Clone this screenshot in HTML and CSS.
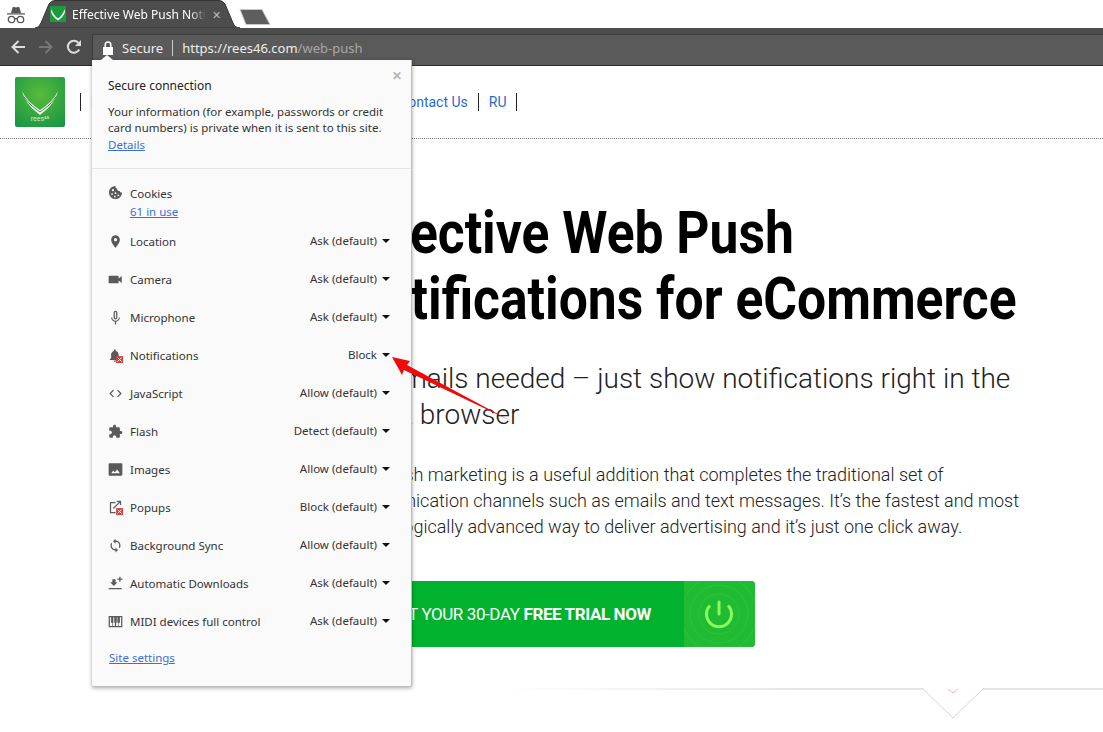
FILE: index.html
```html
<!DOCTYPE html>
<html>
<head>
    <title>Effective Web Push Notifications</title>
    <link rel="stylesheet" href="styles.css">
</head>
<body>
    <div class="tabstrip">
        <svg class="incognito" width="20" height="20" viewBox="0 0 20 20">
            <path fill="#555" d="M5 8 L6.5 2.5 Q7 1.5 8 2 L10 2.6 L12 2 Q13 1.5 13.5 2.5 L15 8 Z M1 8.2 H19 V9.6 H1 Z"/>
            <circle cx="5.5" cy="14.5" r="3.2" fill="none" stroke="#555" stroke-width="1.3"/>
            <circle cx="14.5" cy="14.5" r="3.2" fill="none" stroke="#555" stroke-width="1.3"/>
            <path stroke="#555" stroke-width="1.3" d="M8.6 14 Q10 13 11.4 14" fill="none"/>
        </svg>
        <div class="tab">
            <svg class="tab-shape" width="206" height="28" viewBox="0 0 206 28">
                <path fill="#4d4d4d" stroke="#333" d="M0 28 Q4 28 6 23 L14 4 Q16 .5 20 .5 H184 Q188 .5 190 4 L198 23 Q200 28 205 28 Z"/>
            </svg>
            <span class="tab-icon">
                <svg width="16" height="16" viewBox="0 0 16 16">
                    <rect width="16" height="16" fill="#1d9a3e"/>
                    <path fill="#fff" d="M1.5 3 Q3 9 8 12.5 Q13 9 14.5 3 L15 6 Q13 11.5 8 14.5 Q3 11.5 1 6 Z"/>
                </svg>
            </span>
            <span class="tab-title">Effective Web Push Notifications</span>
            <span class="tab-close">✕</span>
        </div>
        <svg class="new-tab" width="34" height="18" viewBox="0 0 34 18">
            <path fill="#5e5e5e" stroke="#c9c9c9" d="M2 1.5 H24 L32 16.5 H8 Z"/>
        </svg>
    </div>

    <div class="toolbar">
        <div class="nav-buttons">
            <svg width="16" height="16" viewBox="0 0 16 16"><path fill="none" stroke="#ddd" stroke-width="2" d="M15 8H2.5M8.5 2L2.5 8l6 6"/></svg>
            <svg width="16" height="16" viewBox="0 0 16 16"><path fill="none" stroke="#777" stroke-width="2" d="M1 8h12.5M7.5 2l6 6-6 6"/></svg>
            <svg width="16" height="16" viewBox="0 0 16 16"><path fill="none" stroke="#ddd" stroke-width="2" d="M13.2 10.5A6 6 0 1 1 12.4 3.8"/><path fill="#ddd" d="M15 1v6H9z"/></svg>
        </div>
        <div class="omnibox">
            <svg class="lock" width="12" height="14" viewBox="0 0 12 14"><path fill="none" stroke="#fff" stroke-width="1.5" d="M3.2 6V3.8a2.8 2.8 0 0 1 5.6 0V6"/><rect x="1" y="6" width="10" height="8" fill="#fff"/></svg>
            <span class="secure">Secure</span>
            <span class="url"><b>https://rees46.com</b>/web-push</span>
        </div>
    </div>

    <header class="site-header">
        <div class="site-logo">
            <svg width="36" height="24" viewBox="0 0 36 24">
                <path fill="#fff" opacity=".95" d="M0 0 Q5 11 18 19 Q31 11 36 0 Q33 13 18 24 Q3 13 0 0 Z"/>
                <path fill="none" stroke="#2ba144" d="M2 6 Q8 15 18 21 Q28 15 34 6"/>
            </svg>
            <span>rees⁴⁶</span>
        </div>
        <nav class="site-nav">
            <a href="#">Platform</a>
            <a href="#">Integration</a>
            <a href="#">Pricing</a>
            <a href="#">Company</a>
            <a href="#">Contact Us</a>
            <a href="#">RU</a>
        </nav>
    </header>

    <main class="hero">
        <h1>Effective Web Push<br>Notifications for eCommerce</h1>
        <p class="lead">No emails needed – just show notifications right in the<br>latest browser</p>
        <p class="intro">Web push marketing is a useful addition that completes the traditional set of<br>communication channels such as emails and text messages. It’s the fastest and most<br>technologically advanced way to deliver advertising and it’s just one click away.</p>
        <a class="cta" href="#">
            <span class="cta-text">START YOUR 30-DAY <b>FREE TRIAL NOW</b></span>
            <span class="cta-icon">
                <svg width="71" height="66" viewBox="0 0 71 66">
                    <g fill="none" stroke="#3cc548" stroke-width="1" opacity=".6">
                        <circle cx="35" cy="33" r="20"/>
                        <circle cx="35" cy="33" r="29"/>
                        <circle cx="35" cy="33" r="38"/>
                    </g>
                    <path fill="none" stroke="#8dfb5b" stroke-width="3" d="M26 24.5 A12.5 12.5 0 1 0 44 24.5"/>
                    <path stroke="#8dfb5b" stroke-width="3" stroke-linecap="round" d="M35 21V33"/>
                </svg>
            </span>
        </a>
        <div class="divider">
            <svg class="notch" width="64" height="31" viewBox="0 0 64 31">
                <path fill="#fff" stroke="#d5d5d5" d="M1 0L32 30 63 0"/>
                <path fill="none" stroke="#f7b0ac" d="M27 1l5 4 5-4"/>
            </svg>
        </div>
    </main>

    <section class="site-popup">
        <span class="popup-tick"></span>
        <span class="popup-close">✕</span>
        <div class="popup-head">
            <h2>Secure connection</h2>
            <p>Your information (for example, passwords or credit card numbers) is private when it is sent to this site.</p>
            <a href="#">Details</a>
        </div>
        <div class="permissions">
            <div class="perm perm-cookies">
                <svg class="perm-icon" viewBox="0 0 24 24"><path fill="#5a5a5a" fill-rule="evenodd" d="M12 1.5a10.5 10.5 0 1 0 10.5 10.5c-2 .5-3.5-.5-3.7-2.3C16.5 10 14.500 8.500 14.700 6 12.800 5.800 11.500 3.500 12 1.500zM8 6.500a1.700 1.700 0 1 1 0 3.400 1.700 1.700 0 0 1 0-3.400zM6.500 13a1.500 1.500 0 1 1 0 3 1.500 1.500 0 0 1 0-3zM12 11.500a1.500 1.500 0 1 1 0 3 1.500 1.500 0 0 1 0-3zM11 17a1.500 1.500 0 1 1 0 3 1.500 1.500 0 0 1 0-3zM16.500 15a1.500 1.500 0 1 1 0 3 1.500 1.500 0 0 1 0-3z"/></svg>
                <div class="perm-name">Cookies<br><a href="#">61 in use</a></div>
            </div>
            <div class="perm">
                <svg class="perm-icon" viewBox="0 0 24 24"><path fill="#5a5a5a" fill-rule="evenodd" d="M12 2C8.130 2 5 5.130 5 9c0 5.250 7 13 7 13s7-7.750 7-13c0-3.870-3.130-7-7-7zm0 9.500a2.500 2.500 0 1 1 0-5 2.500 2.500 0 0 1 0 5z"/></svg>
                <span class="perm-name">Location</span><span class="perm-value">Ask (default)</span>
            </div>
            <div class="perm">
                <svg class="perm-icon" viewBox="0 0 24 24"><path fill="#5a5a5a" d="M17 10.500V7c0-.55-.45-1-1-1H2c-.55 0-1 .45-1 1v10c0 .55.45 1 1 1h14c.55 0 1-.45 1-1v-3.500l5 4v-11l-5 4z"/></svg>
                <span class="perm-name">Camera</span><span class="perm-value">Ask (default)</span>
            </div>
            <div class="perm">
                <svg class="perm-icon" viewBox="0 0 24 24"><path fill="#5a5a5a" fill-rule="evenodd" d="M12 15c1.660 0 3-1.340 3-3V4c0-1.660-1.340-3-3-3S9 2.340 9 4v8c0 1.660 1.340 3 3 3zm-1-11a1 1 0 0 1 2 0v8a1 1 0 0 1-2 0zM17.300 12c0 3-2.540 5.100-5.300 5.100S6.700 15 6.700 12H5c0 3.410 2.720 6.230 6 6.720V23h2v-4.280c3.280-.48 6-3.300 6-6.720z"/></svg>
                <span class="perm-name">Microphone</span><span class="perm-value">Ask (default)</span>
            </div>
            <div class="perm">
                <svg class="perm-icon" viewBox="0 0 24 24"><path fill="#5a5a5a" d="M11 22c1.100 0 2-.9 2-2H9c0 1.100.9 2 2 2zm6-6v-5c0-3.070-1.630-5.640-4.500-6.320V4c0-.83-.67-1.500-1.500-1.500S9.500 3.170 9.500 4v.68C6.640 5.360 5 7.920 5 11v5l-2 2v1h16v-1z"/><rect x="13" y="13" width="11" height="11" fill="#e03a3a"/><path stroke="#fff" stroke-width="1.500" d="M15.500 15.500l6 6m0-6l-6 6"/></svg>
                <span class="perm-name">Notifications</span><span class="perm-value">Block</span>
            </div>
            <div class="perm">
                <svg class="perm-icon" viewBox="0 0 24 24"><path fill="#5a5a5a" d="M9.400 16.600L4.800 12l4.600-4.600L8 6l-6 6 6 6 1.400-1.400zm5.200 0l4.600-4.600-4.600-4.600L16 6l6 6-6 6-1.400-1.400z"/></svg>
                <span class="perm-name">JavaScript</span><span class="perm-value">Allow (default)</span>
            </div>
            <div class="perm">
                <svg class="perm-icon" viewBox="0 0 24 24"><path fill="#5a5a5a" d="M20.500 11H19V7c0-1.100-.9-2-2-2h-4V3.500C13 2.120 11.880 1 10.500 1S8 2.120 8 3.500V5H4c-1.100 0-1.990.9-1.990 2v3.800H3.500c1.490 0 2.700 1.210 2.700 2.700s-1.210 2.700-2.700 2.700H2V20c0 1.100.9 2 2 2h3.800v-1.500c0-1.490 1.210-2.700 2.700-2.700 1.490 0 2.700 1.210 2.700 2.700V22H17c1.100 0 2-.9 2-2v-4h1.500c1.380 0 2.500-1.120 2.500-2.500S21.880 11 20.500 11z"/></svg>
                <span class="perm-name">Flash</span><span class="perm-value">Detect (default)</span>
            </div>
            <div class="perm">
                <svg class="perm-icon" viewBox="0 0 24 24"><path fill="#5a5a5a" d="M3 2h18c1.100 0 2 .9 2 2v16c0 1.100-.9 2-2 2H3c-1.100 0-2-.9-2-2V4c0-1.100.9-2 2-2z"/><path fill="#fafafa" d="M5 18l3.500-4.500 2.500 3 3.500-4.500 4.500 6z"/></svg>
                <span class="perm-name">Images</span><span class="perm-value">Allow (default)</span>
            </div>
            <div class="perm">
                <svg class="perm-icon" viewBox="0 0 24 24"><path fill="#5a5a5a" d="M3 21V3h9v2H5v14h7v2zM14 1v2h3.590l-9.830 9.830 1.410 1.410L19 4.410V8h2V1z"/><rect x="13" y="13" width="11" height="11" fill="#e03a3a"/><path stroke="#fff" stroke-width="1.500" d="M15.500 15.500l6 6m0-6l-6 6"/></svg>
                <span class="perm-name">Popups</span><span class="perm-value">Block (default)</span>
            </div>
            <div class="perm">
                <svg class="perm-icon" viewBox="0 0 24 24"><path fill="#5a5a5a" d="M12 4V1L8 5l4 4V6c3.310 0 6 2.690 6 6 0 1.010-.25 1.970-.7 2.800l1.460 1.460C19.540 15.030 20 13.570 20 12c0-4.420-3.580-8-8-8zm0 14c-3.310 0-6-2.690-6-6 0-1.010.25-1.970.7-2.800L5.240 7.740C4.460 8.970 4 10.430 4 12c0 4.420 3.580 8 8 8v3l4-4-4-4v3z"/></svg>
                <span class="perm-name">Background Sync</span><span class="perm-value">Allow (default)</span>
            </div>
            <div class="perm">
                <svg class="perm-icon" viewBox="0 0 24 24"><path fill="#5a5a5a" d="M15 10h-3V5H7v5H3.500l6 6zM1 19v2h21v-2zM18 1h2v3h3v2h-3v3h-2V6h-3V4h3z"/></svg>
                <span class="perm-name">Automatic Downloads</span><span class="perm-value">Ask (default)</span>
            </div>
            <div class="perm">
                <svg class="perm-icon" viewBox="0 0 24 24"><path fill="#5a5a5a" fill-rule="evenodd" d="M1 3h22v18H1zM3 5v14h3.500v-5H5V5zm5.500 0v9H7.500v5h3.500v-5h-1V5zM14 5v9h-1v5h3.500v-5H15V5zm5 0v9h-1.500v5H21V5z"/></svg>
                <span class="perm-name">MIDI devices full control</span><span class="perm-value">Ask (default)</span>
            </div>
        </div>
        <a class="popup-settings" href="#">Site settings</a>
    </section>

    <svg class="annotation" width="130" height="75" viewBox="0 0 130 75">
        <path fill="#f00a0a" d="M2 7 L20 11 L17 15 L123 72 L14 20 L12 25 Z"/>
    </svg>
</body>
</html>
```

FILE: styles.css
```css
body {
    margin: 0;
    height: 732px;
    overflow: hidden;
    position: relative;
    background-color: #fff;
    font-family: 'Roboto', sans-serif;
}
a {
    text-decoration: none;
}

/* browser chrome */
.tabstrip {
    height: 28px;
    display: flex;
    align-items: flex-end;
    background-color: #fff;
}
.incognito {
    margin: 0 0 3px 6px;
}
.tab {
    position: relative;
    width: 206px;
    height: 28px;
    margin-left: 9px;
    display: flex;
    align-items: center;
    color: #fff;
    font-family: 'Noto Sans', sans-serif;
    font-size: 12px;
}
.tab-shape {
    position: absolute;
    left: 0;
    top: 0;
}
.tab-icon {
    position: relative;
    height: 16px;
    margin-left: 15px;
    margin-right: 6px;
}
.tab-title {
    position: relative;
    width: 134px;
    overflow: hidden;
    white-space: nowrap;
    -webkit-mask-image: linear-gradient(to right, #000 88%, transparent);
}
.tab-close {
    position: relative;
    margin-left: 6px;
    color: #bbb;
    font-size: 11px;
}
.new-tab {
    margin: 0 0 2px -3px;
}
.toolbar {
    height: 37px;
    display: flex;
    align-items: flex-end;
    background-color: #4d4d4d;
    border-bottom: 1px solid #2e2e2e;
}
.nav-buttons {
    width: 92px;
    height: 37px;
    padding-left: 10px;
    box-sizing: border-box;
    display: flex;
    align-items: center;
    gap: 12px;
}
.omnibox {
    flex: 1;
    height: 31px;
    display: flex;
    align-items: center;
    padding: 0 0 4px 9px;
    box-sizing: border-box;
    background-color: #5a5a5a;
    border-top: 1px solid #3c3c3c;
    border-left: 1px solid #3c3c3c;
    border-radius: 2px 0 0 0;
    font-family: 'Noto Sans', sans-serif;
    font-size: 13px;
    color: #eee;
}
.lock {
    margin-right: 8px;
}
.secure {
    padding-right: 9px;
    margin-right: 9px;
    border-right: 1px solid #ccc;
    line-height: 16px;
}
.url {
    color: #a8a8a8;
}
.url b {
    font-weight: normal;
    color: #eee;
}

/* site header */
.site-header {
    height: 72px;
    display: flex;
    align-items: center;
    padding-left: 15px;
    border-bottom: 1px dotted #777;
}
.site-logo {
    width: 50px;
    height: 50px;
    margin-bottom: 1px;
    display: flex;
    flex-direction: column;
    align-items: center;
    justify-content: flex-end;
    padding-bottom: 4px;
    box-sizing: border-box;
    border-radius: 2px;
    background: radial-gradient(circle at 50% 35%, #58bb3b, #149345);
    color: #d6f0d6;
    font-size: 7px;
}
.site-nav {
    display: flex;
    margin-left: 15px;
    border-left: 1px solid #222;
}
.site-nav a {
    padding: 0 10px;
    border-right: 1px solid #222;
    color: #2a6ad0;
    font-size: 14px;
    line-height: 18px;
}

/* hero */
.hero {
    padding: 61px 0 0 345px;
    color: #222;
}
.hero h1 {
    width: 780px;
    margin: 0;
    font-size: 60px;
    line-height: 66px;
    font-weight: 700;
    color: #000;
    white-space: nowrap;
    transform: scaleX(0.86);
    transform-origin: left top;
}
.lead {
    margin: 29px 0 0;
    font-size: 28px;
    font-weight: 300;
    line-height: 36px;
    white-space: nowrap;
}
.intro {
    margin: 29px 0 0;
    font-size: 18px;
    font-weight: 300;
    line-height: 26px;
    white-space: nowrap;
}
.cta {
    width: 410px;
    height: 66px;
    margin-top: 41px;
    display: flex;
    align-items: center;
    justify-content: flex-end;
    border-radius: 4px;
    overflow: hidden;
    background-color: #00b22d;
    color: #fff;
}
.cta-text {
    margin-right: 33px;
    font-size: 17px;
    letter-spacing: -0.4px;
    white-space: nowrap;
}
.cta-icon {
    width: 71px;
    height: 66px;
    background-color: #1fbb33;
}
.divider {
    position: relative;
    height: 2px;
    margin: 41px 0 0 155px;
    background: linear-gradient(to right, transparent, #e6e6e6 50%);
}
.notch {
    position: absolute;
    left: 421px;
    top: 0;
}

/* site info popup */
.site-popup {
    position: absolute;
    left: 92px;
    top: 60px;
    width: 320px;
    height: 627px;
    box-sizing: border-box;
    background-color: #fafafa;
    border-right: 1px solid #bbb;
    border-bottom: 1px solid #bbb;
    box-shadow: 0 1px 4px rgba(0,0,0,0.35);
    border-radius: 0 0 2px 2px;
    font-family: 'Noto Sans', sans-serif;
    font-size: 12px;
    color: #333;
}
.site-popup a {
    color: #3b6fd4;
    text-decoration: underline;
}
.popup-tick {
    position: absolute;
    left: 9px;
    top: -5px;
    width: 0;
    height: 0;
    border-left: 6px solid transparent;
    border-right: 6px solid transparent;
    border-bottom: 5px solid #fafafa;
}
.popup-close {
    position: absolute;
    right: 9px;
    top: 7px;
    color: #b5b5b5;
    font-size: 12px;
    font-weight: 700;
}
.popup-head {
    height: 90px;
    padding: 18px 20px 0 16px;
    border-bottom: 1px solid #e4e4e4;
}
.popup-head h2 {
    margin: 0 0 10px;
    font-size: 12px;
    line-height: 16px;
    font-weight: normal;
    color: #222;
}
.popup-head p {
    margin: 0;
    font-size: 11.5px;
    line-height: 16px;
}
.popup-head a {
    line-height: 16px;
    font-size: 11.5px;
}
.permissions {
    padding: 16px 21px 0 16px;
}
.perm {
    height: 38px;
    display: flex;
    align-items: center;
}
.perm-cookies {
    height: 37px;
    align-items: flex-start;
}
.perm-cookies .perm-name {
    line-height: 18px;
}
.perm-icon {
    width: 15px;
    height: 15px;
    margin-right: 7px;
    flex: none;
}
.perm-name {
    flex: 1;
    font-size: 11.5px;
}
.perm-value {
    position: relative;
    top: -1px;
    font-size: 11.5px;
}
.perm-value::after {
    content: "";
    display: inline-block;
    margin-left: 5px;
    vertical-align: 2px;
    border-left: 4px solid transparent;
    border-right: 4px solid transparent;
    border-top: 4px solid #111;
}
.popup-settings {
    display: block;
    margin: 10px 0 0 17px;
    font-size: 11.5px;
}
.annotation {
    position: absolute;
    left: 390px;
    top: 350px;
}
```
